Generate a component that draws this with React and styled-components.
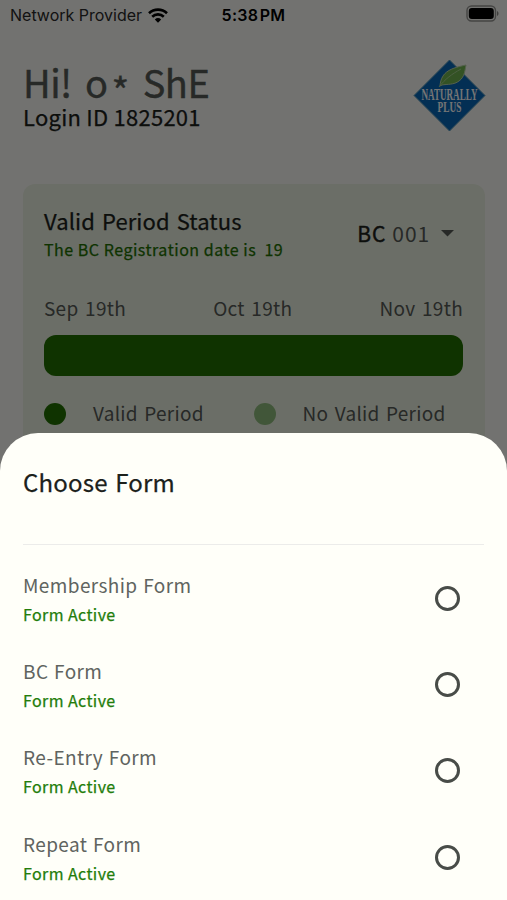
import React from 'react';
import styled, { createGlobalStyle } from 'styled-components';

const colors = {
  page: '#f9f9f4',
  card: '#eaf0e0',
  sheet: '#fffff9',
  ink: '#1c211b',
  muted: '#565a56',
  green: '#216f00',
  paleGreen: '#8fbb7d',
};

const GlobalStyle = createGlobalStyle`
  * {
    box-sizing: border-box;
  }

  body {
    margin: 0;
    font-family: 'Noto Sans CJK KR', 'Noto Sans', sans-serif;
    background: ${colors.page};
  }
`;

const Screen = styled.div`
  position: relative;
  width: 507px;
  height: 900px;
  overflow: hidden;
  background: ${colors.page};
`;

const Text = styled.div`
  font-size: ${props => props.$size}px;
  line-height: ${props => props.$line}px;
  letter-spacing: ${props => props.$spacing || 0}px;
  word-spacing: ${props => props.$word || 0}px;
  color: ${props => props.$color || colors.ink};
  -webkit-text-stroke: ${props => props.$stroke || 0}px currentColor;
  white-space: pre;
`;

const Asterisk = styled.span`
  margin: 0 1px 0 4px;
  vertical-align: -8px;
  line-height: 0;
`;

const StatusBar = styled.div`
  display: grid;
  grid-template-columns: 1fr auto 1fr;
  align-items: center;
  height: 30px;
  padding: 0 8px 0 10px;
  font-family: Inter, sans-serif;
  font-size: 16px;
  color: #000;
`;

const Carrier = styled.div`
  display: flex;
  align-items: center;
  gap: 6px;
  color: #2a2a2a;
`;

const Clock = styled.div`
  padding-right: 2px;
  font-weight: 600;
  letter-spacing: 0.3px;
  word-spacing: -3px;
`;

const BatteryIcon = styled.svg`
  justify-self: end;
  margin-bottom: 3px;
`;

const Header = styled.header`
  display: flex;
  justify-content: space-between;
  padding: 29px 21px 0 23px;
`;

const Greeting = styled.div`
  padding-top: 1px;
`;

const Card = styled.section`
  height: 300px;
  margin: 52px 22px 0 23px;
  padding: 22px 22px 0 21px;
  border-radius: 12px;
  background: ${colors.card};
`;

const CardHeader = styled.div`
  display: flex;
  justify-content: space-between;
  height: 88px;
`;

const Select = styled.div`
  display: flex;
  align-items: center;
  height: 53px;
  gap: 6px;
  padding-right: 9px;
`;

const Arrow = styled.svg`
  margin-left: 5px;
`;

const Dates = styled.div`
  display: flex;
  justify-content: space-between;
  height: 41px;
`;

const PeriodBar = styled.div`
  height: 41px;
  border-radius: 12px;
  background: ${colors.green};
`;

const Legend = styled.div`
  display: grid;
  grid-template-columns: 1fr 1fr;
  margin-top: 26px;
`;

const LegendItem = styled.div`
  display: flex;
  align-items: flex-start;
  gap: 27px;
`;

const Dot = styled.span`
  width: 22px;
  height: 22px;
  margin-top: 1px;
  border-radius: 50%;
  background: ${props => props.$color};
`;

const Overlay = styled.div`
  position: absolute;
  inset: 0;
  display: flex;
  flex-direction: column;
  justify-content: flex-end;
  background: rgba(0, 0, 0, 0.54);
`;

const Sheet = styled.div`
  height: 467px;
  padding: 32px 23px 0;
  border-radius: 38px 38px 0 0;
  background: ${colors.sheet};
`;

const SheetHeader = styled.div`
  height: 80px;
  border-bottom: 1px solid #ececea;
`;

const FormList = styled.div`
  padding-top: 25px;
`;

const FormRow = styled.div`
  display: flex;
  justify-content: space-between;
  height: 86.2px;
  padding: 2px 24px 0 0;
`;

const Radio = styled.span`
  width: 25px;
  height: 25px;
  margin-top: 14px;
  border: 3px solid #484c48;
  border-radius: 50%;
`;

const forms = ['Membership Form', 'BC Form', 'Re-Entry Form', 'Repeat Form'];

const WifiIcon = () => (
  <svg width="20" height="15" viewBox="0 0 20 15" fill="none" stroke="#000" strokeWidth="2.6">
    <path d="M1 5.2a13 13 0 0 1 18 0" />
    <path d="M4.2 8.7a8.4 8.4 0 0 1 11.6 0" />
    <path d="M10 14.8 6.8 11.4a4.7 4.7 0 0 1 6.4 0Z" fill="#000" stroke="none" />
  </svg>
);

const Battery = () => (
  <BatteryIcon width="33" height="17" viewBox="0 0 33 17">
    <rect x="1" y="1" width="28.5" height="15" rx="4.5" fill="none" stroke="#000" strokeOpacity="0.4" strokeWidth="1.4" />
    <rect x="2.8" y="3" width="25" height="11" rx="3" fill="#000" />
    <path d="M31 6v5c2-.7 2-4.3 0-5Z" fill="#000" fillOpacity="0.45" />
  </BatteryIcon>
);

const Logo = () => (
  <svg width="73" height="73" viewBox="0 0 73 73">
    <path d="M36.5 1 72 36.5 36.5 72 1 36.5Z" fill="#0868b8" stroke="#5d99b8" strokeWidth="1" />
    <path d="M27 27C28 12 39 9 53 6c-1 4-1 12-7 16-5 4-12 3-17 4Z" fill="#6fb350" stroke="#b9d3a8" strokeWidth="1" />
    <path d="M26 28C32 20 39 15 48 10" fill="none" stroke="#a5d08e" strokeWidth="1" />
    <g fill="#fff" fontFamily="Liberation Serif, serif" fontWeight="700" textAnchor="middle">
      <text transform="translate(36.5 41) scale(0.57 1)" fontSize="16">NATURALLY</text>
      <text transform="translate(36.5 53) scale(0.62 1)" fontSize="15">PLUS</text>
    </g>
  </svg>
);

const App = () => {
  return (
    <Screen>
      <GlobalStyle />
      <StatusBar>
        <Carrier>
          Network Provider
          <WifiIcon />
        </Carrier>
        <Clock>5:38 PM</Clock>
        <Battery />
      </StatusBar>
      <Header>
        <Greeting>
          <Text $size={38} $line={43} $spacing={-0.5} $word={5} $stroke={0.4} $color={colors.muted}>
            Hi! o<Asterisk>*</Asterisk> ShE
          </Text>
          <Text $size={22} $line={26} $spacing={0.25} $stroke={0.25}>Login ID 1825201</Text>
        </Greeting>
        <Logo />
      </Header>
      <Card>
        <CardHeader>
          <div>
            <Text $size={22} $line={28} $spacing={0.1} $word={2} $stroke={0.25}>Valid Period Status</Text>
            <Text $size={16} $line={30} $spacing={0.52} $stroke={0.25} $color={colors.green}>
              {'The BC Registration date is  19'}
            </Text>
          </div>
          <Select>
            <Text $size={21} $line={28} $spacing={0.9} $stroke={0.4}>BC</Text>
            <Text $size={21} $line={28} $spacing={0.9} $color={colors.muted}>001</Text>
            <Arrow width="13" height="8" viewBox="0 0 13 8">
              <path d="M0 1h13L6.5 7.5Z" fill={colors.muted} />
            </Arrow>
          </Select>
        </CardHeader>
        <Dates>
          <Text $size={19} $line={28} $spacing={0.3} $word={2} $color={colors.muted}>Sep 19th</Text>
          <Text $size={19} $line={28} $spacing={0.3} $word={2} $color={colors.muted}>Oct 19th</Text>
          <Text $size={19} $line={28} $spacing={0.3} $word={2} $color={colors.muted}>Nov 19th</Text>
        </Dates>
        <PeriodBar />
        <Legend>
          <LegendItem>
            <Dot $color={colors.green} />
            <Text $size={19} $line={22} $spacing={0.25} $word={2} $color={colors.muted}>Valid Period</Text>
          </LegendItem>
          <LegendItem>
            <Dot $color={colors.paleGreen} />
            <Text $size={19} $line={22} $spacing={0.25} $word={2} $color={colors.muted}>No Valid Period</Text>
          </LegendItem>
        </Legend>
      </Card>
      <Overlay>
        <Sheet>
          <SheetHeader>
            <Text $size={24} $line={34} $spacing={0.2} $word={2} $stroke={0.25}>Choose Form</Text>
          </SheetHeader>
          <FormList>
            {forms.map(form => (
              <FormRow key={form}>
                <div>
                  <Text $size={19} $line={26} $spacing={0.4} $word={1} $color="#606460">{form}</Text>
                  <Text $size={16} $line={32} $spacing={0.4} $stroke={0.25} $color="#237d0b">Form Active</Text>
                </div>
                <Radio />
              </FormRow>
            ))}
          </FormList>
        </Sheet>
      </Overlay>
    </Screen>
  );
};

export default App;
